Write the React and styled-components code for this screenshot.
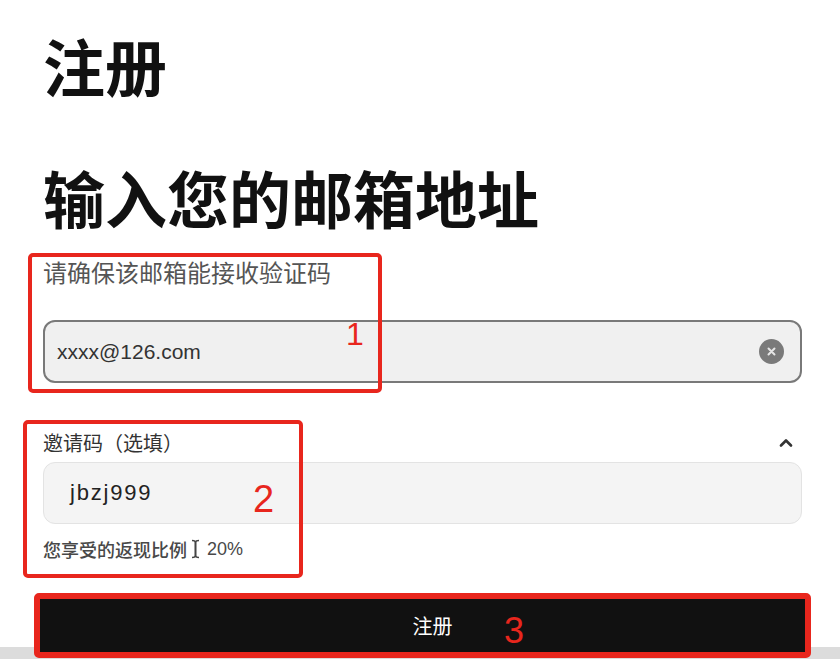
import React from 'react';
import styled, { createGlobalStyle } from 'styled-components';
import { ChevronUp } from 'lucide-react';

const GlobalStyle = createGlobalStyle`
  html, body {
    margin: 0;
    padding: 0;
    background: #fff;
  }
  body {
    font-family: "Noto Sans CJK SC", "Noto Sans", sans-serif;
    color: #111;
    overflow: hidden;
  }
`;

const MARK_RED = '#e8261d';

const Page = styled.div`
  width: 840px;
  height: 659px;
  overflow: hidden;
`;

const Content = styled.div`
  padding: 34px 38px 0 43px;
`;

const Title = styled.h1`
  margin: ${({ $gap }) => $gap || 0}px 0 0;
  font-size: 62px;
  line-height: 63px;
  font-weight: 700;
  color: #111;
`;

const Field = styled.div`
  position: relative;
  margin-top: ${({ $gap }) => $gap}px;
`;

const Hint = styled.div`
  font-size: 24px;
  line-height: 1;
  color: #555;
`;

const LabelRow = styled.div`
  display: flex;
  align-items: center;
  justify-content: space-between;
  height: 20px;
  padding-right: 6px;
  font-size: 20px;
  line-height: 1;
  color: #333;

  svg {
    display: block;
    color: #333;
  }
`;

const InputBox = styled.div`
  display: flex;
  align-items: center;
  justify-content: space-between;
  box-sizing: border-box;
  height: ${({ $height }) => $height}px;
  margin-top: ${({ $gap }) => $gap}px;
  padding: 0 16px 0 ${({ $indent }) => $indent}px;
  border-radius: 12px;
  border: ${({ $strong }) => ($strong ? '2px solid #797979' : '1px solid #e3e3e3')};
  background: ${({ $strong }) => ($strong ? '#f0f0f0' : '#f4f4f4')};
`;

const EmailText = styled.span`
  font-family: "Liberation Sans", Arial, sans-serif;
  font-size: 21px;
  color: #333;
`;

const CodeText = styled.span`
  font-family: "Liberation Sans", Arial, sans-serif;
  font-size: 22px;
  letter-spacing: 1.8px;
  color: #222;
`;

const ClearButton = styled.span`
  display: flex;
  align-items: center;
  justify-content: center;
  width: 25px;
  height: 25px;
  border-radius: 50%;
  background: #7a7a7a;
`;

const Rebate = styled.div`
  display: flex;
  align-items: center;
  gap: 4px;
  margin-top: 16px;
  height: 18px;
  font-size: 18px;
  font-weight: 500;
  line-height: 1;
  color: #484848;

  b {
    font-family: "Liberation Sans", Arial, sans-serif;
    font-weight: 400;
    margin-left: 3px;
  }
`;

const Footer = styled.div`
  margin-top: 35px;
  height: 66px;
  padding: 6px 35px 0 40px;
  box-sizing: border-box;
  background: linear-gradient(to bottom, #fff 54px, #dcdcdc 54px);
`;

const SubmitButton = styled.button`
  position: relative;
  display: flex;
  align-items: center;
  justify-content: center;
  width: 100%;
  height: 53px;
  padding: 0 0 0 20px;
  border: none;
  background: #111;
  color: #fff;
  font-family: "Noto Sans CJK SC", sans-serif;
  font-size: 20px;
  cursor: pointer;
`;

/* red annotation frames and numbers drawn over the form */
const Frame = styled.div`
  position: absolute;
  top: ${({ $top }) => $top}px;
  left: ${({ $left }) => $left}px;
  width: ${({ $width }) => ($width ? `${$width}px` : 'auto')};
  height: ${({ $height }) => ($height ? `${$height}px` : 'auto')};
  right: ${({ $right }) => ($right !== undefined ? `${$right}px` : 'auto')};
  bottom: ${({ $bottom }) => ($bottom !== undefined ? `${$bottom}px` : 'auto')};
  box-sizing: border-box;
  border: ${({ $thick }) => $thick || 4}px solid ${MARK_RED};
  border-radius: 5px;
  pointer-events: none;
`;

const Mark = styled.span`
  position: absolute;
  top: ${({ $top }) => $top}px;
  left: ${({ $left }) => $left}px;
  font-family: "Liberation Sans", Arial, sans-serif;
  font-size: ${({ $size }) => $size}px;
  font-weight: 300;
  line-height: 1;
  color: ${MARK_RED};
`;

function TextCursor() {
  return (
    <svg width="9" height="20" viewBox="0 0 9 20" fill="none" stroke="#444" strokeWidth="1.6">
      <path d="M1 1.5c2 0 3.5 0.5 3.5 2v13c0 1.5-1.5 2-3.5 2" />
      <path d="M8 1.5c-2 0-3.5 0.5-3.5 2v13c0 1.5 1.5 2 3.5 2" />
    </svg>
  );
}

export default function App() {
  return (
    <Page>
      <GlobalStyle />
      <Content>
        <Title>注册</Title>
        <Title $gap={69}>输入您的邮箱地址</Title>

        <Field $gap={31}>
          <Hint>请确保该邮箱能接收验证码</Hint>
          <InputBox $strong $height={63} $gap={36} $indent={12}>
            <EmailText>xxxx@126.com</EmailText>
            <ClearButton>
              <svg width="9" height="9" viewBox="0 0 9 9" stroke="#e6e6e6" strokeWidth="2" strokeLinecap="round">
                <path d="M1.5 1.5l6 6M7.5 1.5l-6 6" />
              </svg>
            </ClearButton>
          </InputBox>
          <Frame $top={-7} $left={-15} $width={354} $height={140} />
          <Mark $top={58} $left={303} $size={32}>1</Mark>
        </Field>

        <Field $gap={50}>
          <LabelRow>
            <span>邀请码（选填）</span>
            <ChevronUp size={20} strokeWidth={3.2} />
          </LabelRow>
          <InputBox $height={62} $gap={9} $indent={26}>
            <CodeText>jbzj999</CodeText>
          </InputBox>
          <Rebate>
            <span>您享受的返现比例</span>
            <TextCursor />
            <b>20%</b>
          </Rebate>
          <Frame $top={-13} $left={-20} $width={280} $height={158} />
          <Mark $top={47} $left={210} $size={38}>2</Mark>
        </Field>
      </Content>

      <Footer>
        <SubmitButton type="button">
          注册
          <Frame $top={-6} $left={-6} $right={-6} $bottom={-6} $thick={6} />
          <Mark $top={14} $left={464} $size={36}>3</Mark>
        </SubmitButton>
      </Footer>
    </Page>
  );
}
